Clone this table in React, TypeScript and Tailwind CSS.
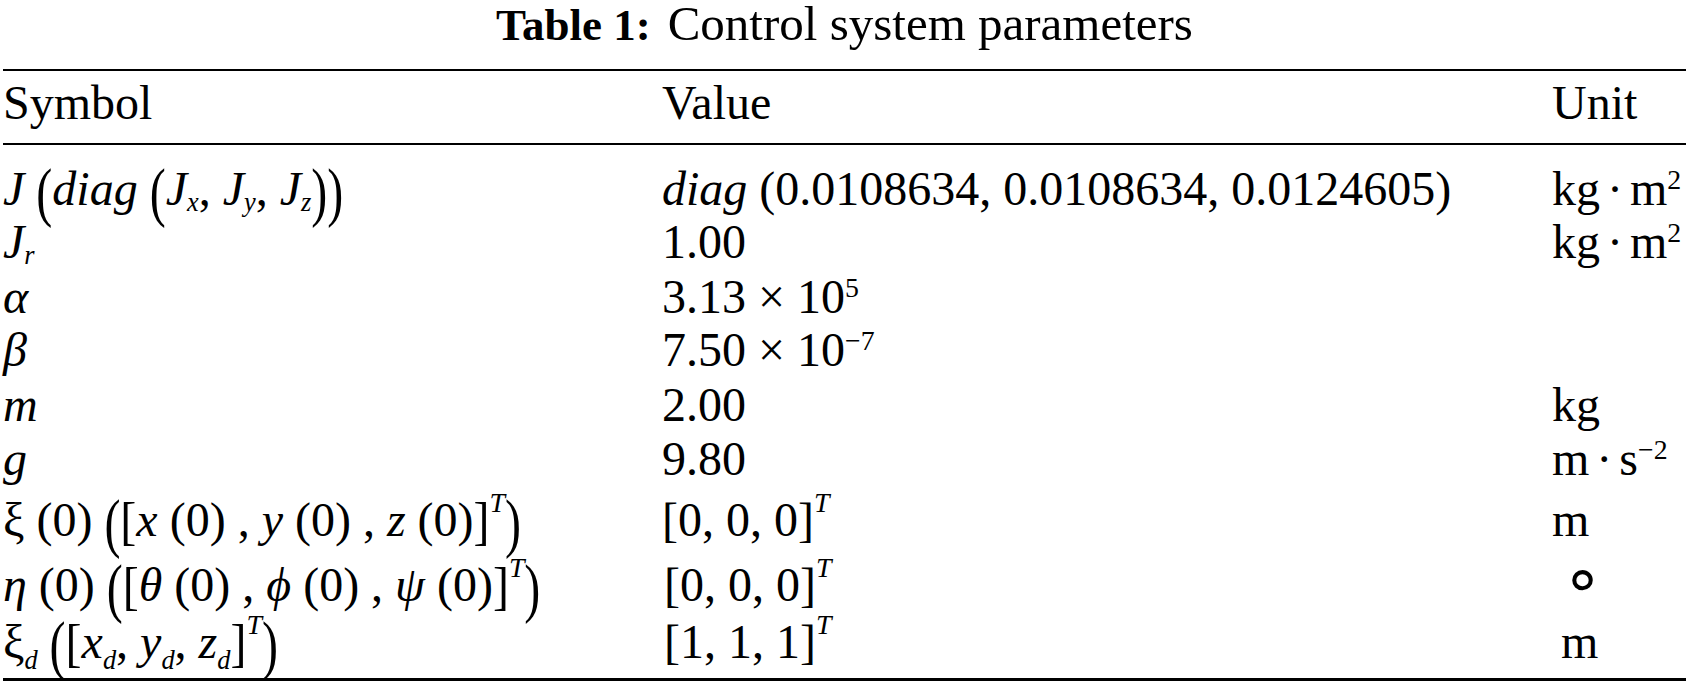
import type { ReactNode } from "react";

type Kids = { children: ReactNode };

const I = ({ children }: Kids) => <span className="italic">{children}</span>;

// zero line-height keeps the shifted scripts from growing the line box
const Sub = ({ children, low }: Kids & { low?: boolean }) => (
  <span className={`text-[0.55em] leading-[0] italic ${low ? "align-[-0.42em]" : "align-[-0.22em]"}`}>
    {children}
  </span>
);

const Sup = ({ children, it, hi }: Kids & { it?: boolean; hi?: boolean }) => (
  <span
    className={`text-[0.58em] leading-[0] ${it ? "italic" : ""} ${hi ? "align-[0.85em]" : "align-[0.58em]"}`}
  >
    {children}
  </span>
);

// stretched delimiters, like \left( \right) in the typeset table
const Big = ({ children }: Kids) => (
  <span className="inline-block scale-y-[1.35] align-[-0.06em]">{children}</span>
);

const Br = ({ children }: Kids) => (
  <span className="inline-block scale-y-[1.12] align-[-0.02em]">{children}</span>
);

const Dot = () => <span className="px-[7px]">·</span>;

type Row = { h: string; sym: ReactNode; val: ReactNode; unit?: ReactNode };

const rows: Row[] = [
  {
    h: "h-[53px]",
    sym: (
      <>
        <I>J</I> <Big>(</Big>
        <I>diag</I> <Big>(</Big>
        <I>J</I>
        <Sub>x</Sub>, <I>J</I>
        <Sub>y</Sub>, <I>J</I>
        <Sub>z</Sub>
        <Big>)</Big>
        <Big>)</Big>
      </>
    ),
    val: (
      <>
        <I>diag</I> (0.0108634, 0.0108634, 0.0124605)
      </>
    ),
    unit: (
      <>
        kg<Dot />m<Sup>2</Sup>
      </>
    ),
  },
  {
    h: "h-[55px]",
    sym: (
      <>
        <I>J</I>
        <Sub>r</Sub>
      </>
    ),
    val: "1.00",
    unit: (
      <>
        kg<Dot />m<Sup>2</Sup>
      </>
    ),
  },
  {
    h: "h-[53px]",
    sym: <I>α</I>,
    val: (
      <>
        3.13 × 10<Sup>5</Sup>
      </>
    ),
  },
  {
    h: "h-[55px]",
    sym: <I>β</I>,
    val: (
      <>
        7.50 × 10<Sup>−7</Sup>
      </>
    ),
  },
  { h: "h-[54px]", sym: <I>m</I>, val: "2.00", unit: "kg" },
  {
    h: "h-[61px]",
    sym: <I>g</I>,
    val: "9.80",
    unit: (
      <>
        m<Dot />s<Sup>−2</Sup>
      </>
    ),
  },
  {
    h: "h-[65px]",
    sym: (
      <>
        ξ (0) <Big>(</Big>
        <Br>[</Br>
        <I>x</I> (0) , <I>y</I> (0) , <I>z</I> (0)
        <Br>]</Br>
        <Sup it hi>
          T
        </Sup>
        <Big>)</Big>
      </>
    ),
    val: (
      <>
        [0, 0, 0]
        <Sup it hi>
          T
        </Sup>
      </>
    ),
    unit: "m",
  },
  {
    h: "h-[57px]",
    sym: (
      <>
        <I>η</I> (0) <Big>(</Big>
        <Br>[</Br>
        <I>θ</I> (0) , <I>ϕ</I> (0) , <I>ψ</I> (0)
        <Br>]</Br>
        <Sup it hi>
          T
        </Sup>
        <Big>)</Big>
      </>
    ),
    val: (
      <span className="pl-[2px]">
        [0, 0, 0]
        <Sup it hi>
          T
        </Sup>
      </span>
    ),
    unit: <span className="pl-[10px] font-['DejaVu_Sans',sans-serif] text-[66px] leading-[0]">∘</span>,
  },
  {
    h: "h-[63px]",
    sym: (
      <>
        ξ<Sub low>d</Sub> <Big>(</Big>
        <Br>[</Br>
        <I>x</I>
        <Sub low>d</Sub>, <I>y</I>
        <Sub low>d</Sub>, <I>z</I>
        <Sub low>d</Sub>
        <Br>]</Br>
        <Sup it hi>
          T
        </Sup>
        <Big>)</Big>
      </>
    ),
    val: (
      <span className="pl-[2px]">
        [1, 1, 1]
        <Sup it hi>
          T
        </Sup>
      </span>
    ),
    unit: <span className="pl-[9px]">m</span>,
  },
];

export default function App() {
  return (
    <div className="w-[1689px] h-[688px] overflow-hidden bg-white text-black font-['Liberation_Serif','Times_New_Roman',serif]">
      <div className="h-[69px] text-center text-[49px] leading-[48px] whitespace-nowrap">
        <span className="font-bold text-[45px]">Table 1:</span>
        <span className="pl-[17px]">Control system parameters</span>
      </div>

      <div className="mx-[3px] border-t-2 border-b-[3px] border-black text-[48px]">
        <div className="grid grid-cols-[659px_890px_1fr] h-[74px] leading-[63px] border-b-2 border-black whitespace-nowrap">
          <div>Symbol</div>
          <div>Value</div>
          <div>Unit</div>
        </div>

        <div className="pt-[17px] leading-[54px] whitespace-nowrap">
          {rows.map((r, i) => (
            <div key={i} className={`grid grid-cols-[659px_890px_1fr] ${r.h}`}>
              <div>{r.sym}</div>
              <div>{r.val}</div>
              <div>{r.unit}</div>
            </div>
          ))}
        </div>
      </div>
    </div>
  );
}
